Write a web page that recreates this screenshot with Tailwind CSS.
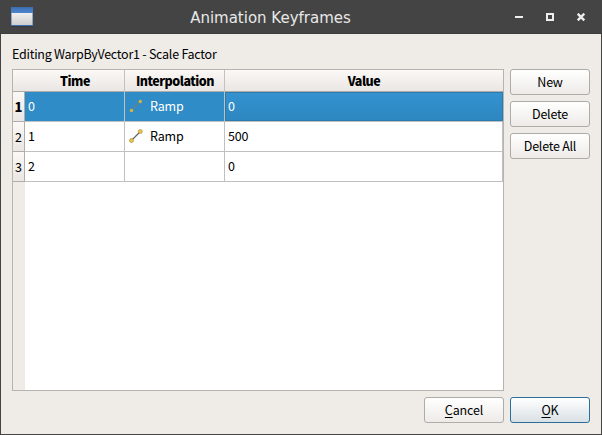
<!DOCTYPE html>
<html lang="en">
<head>
<meta charset="utf-8">
<title>Animation Keyframes</title>
<script src="https://cdn.jsdelivr.net/npm/@tailwindcss/browser@4"></script>
</head>
<body class="w-[602px] h-[435px] overflow-hidden bg-[#444444]">
<div class="w-[602px] h-[435px] flex flex-col font-['Noto_Sans_CJK_SC','Noto_Sans',sans-serif] text-[12.5px] leading-[18px] text-black">
  <header class="h-[34px] shrink-0 grid grid-cols-[120px_301px_181px] items-center bg-[#444444] border-b border-[#3c3c3c]">
    <svg class="ml-[11px] mt-[2px]" width="22" height="21" viewBox="0 0 22 21">
      <defs><linearGradient id="w" x1="0" y1="0" x2="0" y2="1"><stop offset="0" stop-color="#efefef"/><stop offset="1" stop-color="#cfcfcf"/></linearGradient>
      <linearGradient id="b" x1="0" y1="0" x2="0" y2="1"><stop offset="0" stop-color="#3f72b8"/><stop offset="1" stop-color="#4c86cd"/></linearGradient></defs>
      <rect y="1" width="22" height="19" rx="1" fill="#35383d"/>
      <rect width="22" height="19" fill="#3e6fae"/>
      <rect x="0" y="1" width="22" height="5" fill="url(#b)"/>
      <rect x="0.5" y="6" width="21" height="12" fill="url(#w)"/>
    </svg>
    <h1 class="pt-[2px] text-center font-['DejaVu_Sans'] text-[15px] text-[#e8e8e8] whitespace-nowrap">Animation Keyframes</h1>
    <div class="flex justify-end pr-[16px] gap-[22px] items-center pt-px">
      <svg width="9" height="9" viewBox="0 0 9 9"><path d="M0 3H8V5H0z" fill="#eee"/></svg>
      <svg width="9" height="9" viewBox="0 0 9 9"><path d="M1 1h6v6h-6z" fill="none" stroke="#eee" stroke-width="2"/></svg>
      <svg width="9" height="9" viewBox="0 0 9 9"><path d="M0.7 0.7L7.3 7.3M7.3 0.7L0.7 7.3" stroke="#eee" stroke-width="2.4"/></svg>
    </div>
  </header>
  <main class="flex-1 mx-px mb-px bg-[#efebe7] pl-[11px] pr-[11px] pt-[11px] flex flex-col">
    <p class="h-[24px] leading-[18px] whitespace-nowrap tracking-[-0.25px]">Editing WarpByVector1 - Scale Factor</p>
    <div class="flex gap-[6px]">
      <section class="w-[492px] h-[322px] border border-[#b6b3b0] bg-white flex">
        <div class="w-[12px] shrink-0 bg-[#efebe7]">
          <div class="h-[22px] bg-linear-to-b from-[#fbf8f6] to-[#e9e6e3] border-b border-[#aeaba8]"></div>
          <div class="h-[30px] flex items-center justify-center font-black text-[13px] bg-linear-to-b from-[#fbf8f6] to-[#e9e6e3] border-b border-r border-[#b0adaa]">1</div>
          <div class="h-[30px] flex items-center justify-center bg-linear-to-b from-[#fbf8f6] to-[#e9e6e3] border-b border-r border-[#b0adaa]">2</div>
          <div class="h-[30px] flex items-center justify-center bg-linear-to-b from-[#fbf8f6] to-[#e9e6e3] border-b border-r border-[#b0adaa]">3</div>
        </div>
        <div class="w-[478px]">
          <div class="h-[22px] grid grid-cols-[100px_100px_278px] font-black text-center leading-[22px] tracking-[-0.5px] bg-linear-to-b from-[#fbf8f6] to-[#e9e6e3] border-b border-[#aeaba8]">
            <div class="pl-px border-r border-[#c4c1be]">Time</div><div class="pl-px border-r border-[#c4c1be]">Interpolation</div><div>Value</div>
          </div>
          <div class="h-[30px] grid grid-cols-[100px_100px_278px] leading-[28px] text-white bg-[#308cc6] border-b border-[#c0c0c0]">
            <div class="pl-[3px] border-r border-[#c0c0c0]">0</div>
            <div class="pl-[4px] flex gap-[7px] border-r border-[#c0c0c0]">
              <svg class="mt-[7px]" width="14" height="14" viewBox="0 0 14 14"><path d="M2.5 11.5L11.3 2.5" stroke="#6b8088" stroke-width="1.2"/><circle cx="2.5" cy="11.5" r="1.7" fill="#d6b23f"/><circle cx="11.3" cy="2.5" r="1.7" fill="#d6b23f"/></svg>
              <span class="tracking-[-0.2px]">Ramp</span></div>
            <div class="pl-[2px] leading-[26px] border border-[#2a7bae] bg-linear-to-b from-[#3392cf] to-[#2d87c0]">0</div>
          </div>
          <div class="h-[30px] grid grid-cols-[100px_100px_278px] leading-[28px] border-b border-[#c0c0c0]">
            <div class="pl-[3px] border-r border-[#c0c0c0]">1</div>
            <div class="pl-[4px] flex gap-[7px] border-r border-[#c0c0c0]">
              <svg class="mt-[7px]" width="14" height="14" viewBox="0 0 14 14"><path d="M2.5 11.5L11.3 2.5" stroke="#666" stroke-width="1.2"/><circle cx="2.5" cy="11.5" r="2" fill="#f0c83b" stroke="#a58e49" stroke-width=".7"/><circle cx="11.3" cy="2.5" r="2" fill="#f0c83b" stroke="#a58e49" stroke-width=".7"/></svg>
              <span class="tracking-[-0.2px]">Ramp</span></div>
            <div class="pl-[3px] tracking-[-0.25px] border-r border-[#c0c0c0]">500</div>
          </div>
          <div class="h-[30px] grid grid-cols-[100px_100px_278px] leading-[28px] border-b border-[#c0c0c0]">
            <div class="pl-[3px] border-r border-[#c0c0c0]">2</div>
            <div class="border-r border-[#c0c0c0]"></div>
            <div class="pl-[3px] border-r border-[#c0c0c0]">0</div>
          </div>
        </div>
      </section>
      <div class="flex flex-col gap-[6px] w-[80px] shrink-0 tracking-[-0.25px]">
        <button class="h-[26px] rounded-[3px] border border-[#aeaba8] bg-linear-to-b from-white to-[#edebe8] leading-[24px]">New</button>
        <button class="h-[26px] rounded-[3px] border border-[#aeaba8] bg-linear-to-b from-white to-[#edebe8] leading-[24px]">Delete</button>
        <button class="h-[26px] rounded-[3px] border border-[#aeaba8] bg-linear-to-b from-white to-[#edebe8] leading-[24px]">Delete All</button>
      </div>
    </div>
    <div class="flex justify-end gap-[6px] pt-[6px] tracking-[-0.15px]">
      <button class="w-[80px] h-[26px] rounded-[3px] border border-[#aeaba8] bg-linear-to-b from-white to-[#edebe8] leading-[24px]"><span class="underline underline-offset-2">C</span>ancel</button>
      <button class="w-[80px] h-[26px] rounded-[3px] border border-[#2a6f9e] bg-linear-to-b from-white to-[#d9e0e4] leading-[24px]"><span class="underline underline-offset-2">O</span>K</button>
    </div>
  </main>
</div>
</body>
</html>
